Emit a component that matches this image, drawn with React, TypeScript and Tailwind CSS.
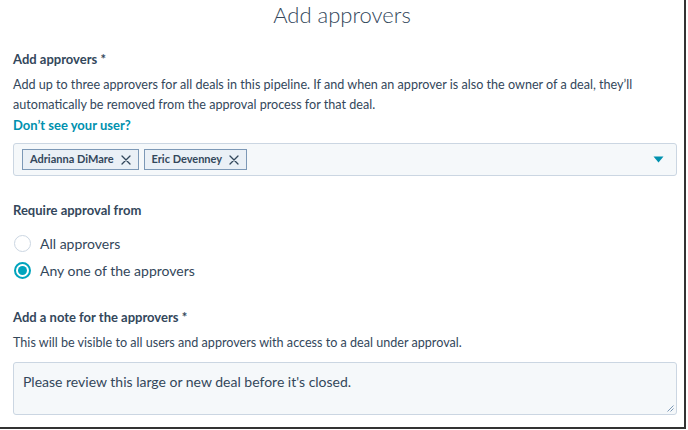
import React from "react";

function XIcon() {
  return (
    <svg width="10" height="10" viewBox="0 0 10 10" className="ml-[7px]">
      <path d="M1 1L9 9M9 1L1 9" stroke="#33475b" strokeWidth="1.3" strokeLinecap="round" />
    </svg>
  );
}

function Tag({ label }: { label: string }) {
  return (
    <div className="flex items-center h-[21px] px-[7px] bg-[#eaf0f6] border border-[#7c98b6] text-[11px] font-bold text-[#33475b]">
      <span>{label}</span>
      <XIcon />
    </div>
  );
}

function Radio({ checked, label }: { checked: boolean; label: string }) {
  return (
    <div className="flex items-center h-[27px]">
      <div
        className={
          checked
            ? "w-[17px] h-[17px] rounded-full border-2 border-[#00a4bd] bg-white flex items-center justify-center"
            : "w-[17px] h-[17px] rounded-full border border-[#cbd6e2] bg-white"
        }
      >
        {checked && <div className="w-[9px] h-[9px] rounded-full bg-[#00a4bd]" />}
      </div>
      <span className="ml-[9px] text-[14px] text-[#33475b]">{label}</span>
    </div>
  );
}

export default function App() {
  return (
    <div
      className="w-[688px] h-[430px] bg-white overflow-hidden"
      style={{ fontFamily: "Lato, 'Noto Sans', sans-serif" }}
    >
      <div className="w-[686px] h-[429px] border-r-2 border-b-2 border-[#333] flex flex-col px-[13px] text-[#33475b]">
        <div className="h-[29px] flex items-end justify-center">
          <h1 className="text-[22px] font-light leading-[28px] text-[#33475b]">Add approvers</h1>
        </div>
        <div className="mt-[21px] text-[13px] font-bold leading-[18px]">Add approvers *</div>
        <p className="mt-[7px] text-[12.6px] leading-[20px]">
          Add up to three approvers for all deals in this pipeline. If and when an approver is also the owner of a deal, they’ll
          automatically be removed from the approval process for that deal.
        </p>
        <div className="text-[13px] font-bold leading-[20px] text-[#0091ae]">Don’t see your user?</div>
        <div className="mt-[8px] h-[33px] w-[664px] bg-[#f5f8fa] border border-[#cbd6e2] rounded-[3px] flex items-center pl-[8px] pr-[12px] gap-[5px]">
          <Tag label="Adrianna DiMare" />
          <Tag label="Eric Devenney" />
          <div className="flex-1" />
          <svg width="11" height="7" viewBox="0 0 11 7">
            <path d="M0.5 0.5H10.5L5.5 6.5Z" fill="#0091ae" />
          </svg>
        </div>
        <div className="mt-[25px] text-[13px] font-bold leading-[18px]">Require approval from</div>
        <div className="mt-[11px] flex flex-col pl-[1px]">
          <Radio checked={false} label="All approvers" />
          <Radio checked={true} label="Any one of the approvers" />
        </div>
        <div className="mt-[24px] text-[13px] font-bold leading-[18px]">Add a note for the approvers *</div>
        <p className="mt-[8px] text-[12.6px] leading-[18px]">
          This will be visible to all users and approvers with access to a deal under approval.
        </p>
        <div className="mt-[10px] h-[53px] w-[664px] bg-[#f5f8fa] border border-[#cbd6e2] rounded-[3px] relative px-[9px] pt-[8px] text-[14px]">
          Please review this large or new deal before it's closed.
          <svg width="7" height="7" viewBox="0 0 7 7" className="absolute right-[2px] bottom-[2px]">
            <path d="M6.5 0.5L0.5 6.5M6.5 3.5L3.5 6.5" stroke="#7c98b6" strokeWidth="1" />
          </svg>
        </div>
      </div>
    </div>
  );
}
